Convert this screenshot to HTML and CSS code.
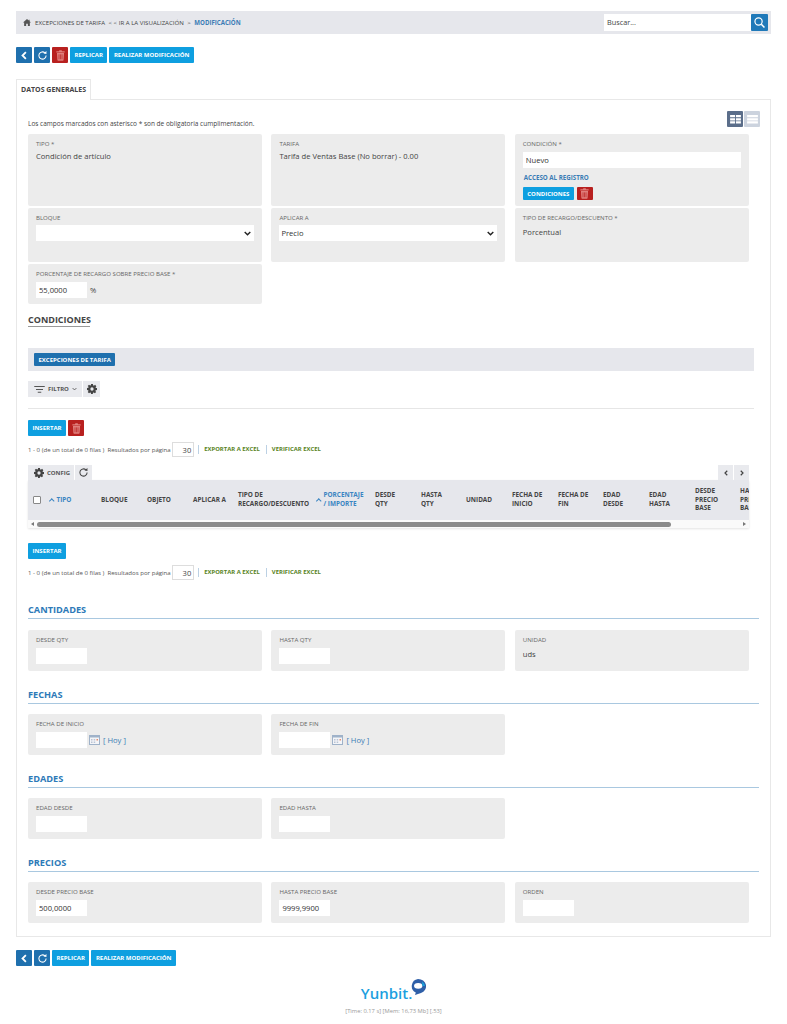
FILE: index.html
```html
<!DOCTYPE html>
<html lang="es">
<head>
<meta charset="utf-8">
<title>Excepciones de tarifa</title>
<link rel="stylesheet" href="styles.css">
</head>
<body>
<svg class="defs" width="0" height="0" aria-hidden="true">
  <symbol id="i-trash" viewBox="0 0 12 14"><path fill="currentColor" d="M4.5 0h3l.6 1.2H11.500V3H.5V1.200h3.400zM1.300 3.800h9.400l-.6 9.200a1 1 0 0 1-1 1H2.900a1 1 0 0 1-1-1z"/><path stroke="#b8201f" stroke-width=".9" d="M4 5.500v6.500M6 5.500v6.500M8 5.500v6.500"/></symbol>
  <symbol id="i-reload" viewBox="0 0 14 14"><path fill="none" stroke="currentColor" stroke-width="1.300" d="M11.600 7a4.600 4.600 0 1 1-1.500-3.400"/><path fill="currentColor" d="M8.300 4.500 12 5V1.300z"/></symbol>
  <symbol id="i-back" viewBox="0 0 8 12"><path fill="none" stroke="currentColor" stroke-width="2.400" d="M6.500 1.500 2 6l4.500 4.500"/></symbol>
  <symbol id="i-gear" viewBox="0 0 14 14"><path fill="currentColor" fill-rule="evenodd" d="M5.700 0h2.600l.3 1.800 1.100.5L11.300 1.200l1.800 1.800-1.100 1.500.5 1.100L14 5.700v2.600l-1.800.3-.5 1.100 1.100 1.500-1.800 1.800-1.500-1.100-1.100.5-.3 1.800H5.700l-.3-1.800-1.100-.5-1.500 1.100L1 11.300l1.100-1.500-.5-1.100L0 8.300V5.700l1.800-.3.500-1.100L1 2.800 2.800 1l1.500 1.100 1.100-.5zM7 4.700a2.300 2.300 0 1 0 0 4.600 2.300 2.300 0 0 0 0-4.600z"/></symbol>
  <symbol id="i-cal" viewBox="0 0 11 10"><rect width="11" height="10" fill="#9fb2c9"/><rect x="1" y="2.500" width="9" height="6.500" fill="#f4f5f8"/><path fill="#b9c4d4" d="M2 4h1.500v1.500H2zM4.700 4h1.500v1.500H4.700zM2 6.500h1.500V8H2zM4.700 6.500h1.500V8H4.700z"/><path fill="#e38b6d" d="M7.500 4H9v1.500H7.500z"/></symbol>
</svg>

<div class="page">
  <nav class="crumbs">
    <div class="crumb-path">
      <svg class="home" viewBox="0 0 14 12"><path fill="#555" d="M7 0 0 6h2v6h3.500V8h3v4H12V6h2l-2.500-2.200V1h-1.500v1.500z"/></svg>
      <span>EXCEPCIONES DE TARIFA</span>
      <span class="crumb-gap">&lt; &lt; IR A LA VISUALIZACIÓN</span>
      <span class="crumb-gap">&gt;</span>
      <b class="crumb-now">MODIFICACIÓN</b>
    </div>
    <div class="search">
      <span class="search-field">Buscar...</span>
      <span class="search-btn"><svg viewBox="0 0 14 14" width="11" height="11"><circle cx="5.800" cy="5.800" r="4.600" fill="none" stroke="#fff" stroke-width="1.500"/><path stroke="#fff" stroke-width="2" d="m9.300 9.300 4 4"/></svg></span>
    </div>
  </nav>

  <div class="actions">
    <button class="btn icon navy"><svg width="6" height="9"><use href="#i-back"/></svg></button>
    <button class="btn icon navy"><svg width="11" height="11"><use href="#i-reload"/></svg></button>
    <button class="btn icon red"><svg width="9" height="11"><use href="#i-trash"/></svg></button>
    <button class="btn sky">REPLICAR</button>
    <button class="btn sky">REALIZAR MODIFICACIÓN</button>
  </div>

  <div class="tabs"><span class="tab">DATOS GENERALES</span></div>

  <main class="panel">
    <div class="legend">
      <p>Los campos marcados con asterisco * son de obligatoria cumplimentación.</p>
      <div class="views">
        <span class="view on"><svg viewBox="0 0 12 10" width="11" height="9"><path fill="#fff" d="M0 0h5.500v2.500H0zM6.500 0H12v2.500H6.500zM0 3.500h5.500v2.500H0zM6.500 3.500H12v2.500H6.500zM0 7h5.500v2.500H0zM6.500 7H12v2.500H6.500z"/></svg></span>
        <span class="view"><svg viewBox="0 0 12 10" width="11" height="9"><path fill="#fff" d="M0 0h12v2.500H0zM0 3.500h12v2.500H0zM0 7h12v2.500H0z"/></svg></span>
      </div>
    </div>

    <div class="grid">
      <div class="card h72"><label>TIPO *</label><div class="val">Condición de artículo</div></div>
      <div class="card h72"><label>TARIFA</label><div class="val">Tarifa de Ventas Base (No borrar) - 0.00</div></div>
      <div class="card h72">
        <label>CONDICIÓN *</label>
        <input class="input wide" value="Nuevo">
        <a class="reg">ACCESO AL REGISTRO</a>
        <div class="cond-btns">
          <button class="btn sky">CONDICIONES</button>
          <button class="btn icon red"><svg width="9" height="11"><use href="#i-trash"/></svg></button>
        </div>
      </div>
      <div class="card h54"><label>BLOQUE</label><select class="select"><option></option></select></div>
      <div class="card h54"><label>APLICAR A</label><select class="select"><option>Precio</option></select></div>
      <div class="card h54"><label>TIPO DE RECARGO/DESCUENTO *</label><div class="val lower">Porcentual</div></div>
      <div class="card h40"><label>PORCENTAJE DE RECARGO SOBRE PRECIO BASE *</label><div class="inline"><input class="input short" value="55,0000"><span class="unit">%</span></div></div>
    </div>

    <h2 class="cond-title">CONDICIONES</h2>
    <div class="band"><button class="btn navy">EXCEPCIONES DE TARIFA</button></div>

    <div class="filter-row">
      <span class="tool"><svg viewBox="0 0 12 8" width="11" height="7"><path fill="#555" d="M0 0h12v1.200H0zM2 3.300h8v1.200H2zM4 6.600h4v1.200H4z"/></svg><b>FILTRO</b><svg viewBox="0 0 8 5" width="5" height="4"><path fill="none" stroke="#555" stroke-width="1.400" d="m1 1 3 3 3-3"/></svg></span>
      <span class="tool square"><svg width="10" height="10" class="dark"><use href="#i-gear"/></svg></span>
    </div>
    <hr class="rule">

    <div class="ins-row">
      <button class="btn sky ins">INSERTAR</button>
      <button class="btn icon red ins"><svg width="9" height="11"><use href="#i-trash"/></svg></button>
    </div>
    <div class="pager">
      <span>1 - 0 (de un total de 0 filas )</span><span>Resultados por página</span>
      <span class="per">30</span>
      <a class="xl first">EXPORTAR A EXCEL</a><a class="xl">VERIFICAR EXCEL</a>
    </div>

    <div class="tbl-tools">
      <div class="tools-left">
        <span class="tool config"><svg width="10" height="10" class="dark"><use href="#i-gear"/></svg><b>CONFIG</b></span>
        <span class="tool square tall"><svg width="11" height="11" class="dark"><use href="#i-reload"/></svg></span>
      </div>
      <div class="tools-right">
        <span class="tool pg"><svg width="4" height="6" class="dark"><use href="#i-back"/></svg></span>
        <span class="tool pg"><svg width="4" height="6" class="dark flip"><use href="#i-back"/></svg></span>
      </div>
    </div>
    <div class="table">
      <div class="thead">
        <span class="th"><i class="check"></i></span>
        <span class="th sort"><i class="caret"></i>TIPO</span>
        <span class="th">BLOQUE</span>
        <span class="th">OBJETO</span>
        <span class="th long">APLICAR A</span>
        <span class="th long">TIPO DE RECARGO/DESCUENTO</span>
        <span class="th sort long"><i class="caret"></i><span class="sort-text">PORCENTAJE / IMPORTE</span></span>
        <span class="th">DESDE QTY</span>
        <span class="th">HASTA QTY</span>
        <span class="th">UNIDAD</span>
        <span class="th">FECHA DE INICIO</span>
        <span class="th">FECHA DE FIN</span>
        <span class="th">EDAD DESDE</span>
        <span class="th">EDAD HASTA</span>
        <span class="th">DESDE PRECIO BASE</span>
        <span class="th">HASTA PRECIO BASE</span>
      </div>
      <div class="scrollbar">
        <i class="arrow left"></i>
        <span class="thumb"></span>
        <i class="arrow right"></i>
      </div>
    </div>

    <div class="ins-row second"><button class="btn sky ins">INSERTAR</button></div>
    <div class="pager">
      <span>1 - 0 (de un total de 0 filas )</span><span>Resultados por página</span>
      <span class="per">30</span>
      <a class="xl first">EXPORTAR A EXCEL</a><a class="xl">VERIFICAR EXCEL</a>
    </div>

    <section class="sec first-sec">
      <h3>CANTIDADES</h3>
      <div class="grid">
        <div class="card h41"><label>DESDE QTY</label><input class="input short"></div>
        <div class="card h41"><label>HASTA QTY</label><input class="input short"></div>
        <div class="card h41"><label>UNIDAD</label><div class="val unidad">uds</div></div>
      </div>
    </section>
    <section class="sec">
      <h3>FECHAS</h3>
      <div class="grid">
        <div class="card h41"><label>FECHA DE INICIO</label><div class="inline"><input class="input short"><svg class="cal" width="11" height="10"><use href="#i-cal"/></svg><a class="today">[ Hoy ]</a></div></div>
        <div class="card h41"><label>FECHA DE FIN</label><div class="inline"><input class="input short"><svg class="cal" width="11" height="10"><use href="#i-cal"/></svg><a class="today">[ Hoy ]</a></div></div>
      </div>
    </section>
    <section class="sec">
      <h3>EDADES</h3>
      <div class="grid">
        <div class="card h41"><label>EDAD DESDE</label><input class="input short"></div>
        <div class="card h41"><label>EDAD HASTA</label><input class="input short"></div>
      </div>
    </section>
    <section class="sec">
      <h3>PRECIOS</h3>
      <div class="grid">
        <div class="card h41"><label>DESDE PRECIO BASE</label><input class="input short" value="500,0000"></div>
        <div class="card h41"><label>HASTA PRECIO BASE</label><input class="input short" value="9999,9900"></div>
        <div class="card h41"><label>ORDEN</label><input class="input short"></div>
      </div>
    </section>
  </main>

  <div class="actions bottom">
    <button class="btn icon navy"><svg width="6" height="9"><use href="#i-back"/></svg></button>
    <button class="btn icon navy"><svg width="11" height="11"><use href="#i-reload"/></svg></button>
    <button class="btn sky">REPLICAR</button>
    <button class="btn sky">REALIZAR MODIFICACIÓN</button>
  </div>

  <footer class="foot">
    <div class="logo">
      <span class="logo-word">Yunbit.</span>
      <svg class="bubble" viewBox="0 0 16 16" width="16" height="16"><path fill="#2f5fa8" d="M8 0a8 7.200 0 0 1 3 13.900L5 16l.8-2.400A7.200 7.200 0 0 1 8 0z"/><ellipse cx="8.200" cy="6.800" rx="4.200" ry="2.900" fill="#fff"/><path fill="#19a3dc" d="M12 2.500a7 6 0 0 1 3 4.500h-2.500z"/></svg>
    </div>
    <p>[Time: 0.17 s] [Mem: 16,73 Mb] [.53]</p>
  </footer>
</div>
</body>
</html>
```

FILE: styles.css
```css
* { box-sizing: border-box; }
html, body { margin: 0; padding: 0; }
body { background: #fff; font-family: "Open Sans", "Liberation Sans", sans-serif; color: #444; font-size: 7px; height: 1024px; overflow: hidden; }
.defs { position: absolute; }
.page { padding: 11px 16px 0; }

.crumbs { height: 23px; background: #e6e7ec; display: flex; justify-content: space-between; align-items: center; padding: 0 3px 0 7px; }
.crumb-path { display: flex; align-items: center; font-size: 6.100px; color: #444; }
.home { width: 8px; height: 7px; margin-right: 4px; }
.crumb-gap { margin-left: 3.500px; }
.crumb-now { color: #3a7cb5; margin-left: 3.500px; font-weight: 700; }
.search { display: flex; height: 17px; width: 164px; }
.search-field { flex: 1; background: #fff; font-size: 7.300px; line-height: 17px; padding-left: 3px; color: #444; }
.search-btn { width: 17px; background: #1f79b9; display: flex; align-items: center; justify-content: center; border-radius: 1px; }

.actions { display: flex; gap: 2px; margin-top: 13px; }
.btn { height: 16px; border: 0; padding: 0 4.500px; font-family: inherit; font-size: 6px; font-weight: 700; color: #fff; display: inline-flex; align-items: center; justify-content: center; border-radius: 1px; white-space: nowrap; }
.btn.icon { width: 16px; padding: 0; }
.navy { background: #1f70ae; }
.red { background: #b8201f; color: #e07f7c; }
.sky { background: #0e9fe0; }

.tabs { margin-top: 16px; height: 20px; display: flex; }
.tab { width: 75px; height: 21px; border: 1px solid #e8e8e8; border-bottom: 0; background: #fff; font-size: 7px; font-weight: 700; color: #444; padding-left: 4px; line-height: 20px; white-space: nowrap; position: relative; z-index: 1; }

.panel { height: 838px; border: 1px solid #e8e8e8; padding: 10px 11px 0; }
.legend { display: flex; justify-content: space-between; align-items: flex-end; height: 17px; width: 732px; }
.legend p { margin: 0; font-size: 6.500px; color: #444; line-height: 9px; margin-bottom: -1px; }
.views { display: flex; gap: 1px; }
.view { width: 16px; height: 16px; background: #ccd3de; display: flex; align-items: center; justify-content: center; border-radius: 1px; }
.view.on { background: #5b6e8a; }

.grid { display: grid; grid-template-columns: 234px 234px 234px; column-gap: 9.400px; row-gap: 2px; margin-top: 7px; }
.card { background: #ececec; border-radius: 2px; padding: 6px 8px 0; }
.h72 { height: 72px; }
.h54 { height: 54px; }
.h40 { height: 40px; }
.h41 { height: 41px; }
.card label { display: block; font-size: 6.100px; line-height: 8px; color: #666; }
.val { font-size: 7.600px; color: #444; margin-top: 3px; line-height: 11px; }
.val.lower { margin-top: 5px; }
.val.unidad { margin-top: 5px; }
.input { display: block; height: 16px; border: 0; outline: 0; border-radius: 0; background: #fff; font-family: inherit; font-size: 7.600px; line-height: 16px; padding: 0 0 0 3px; color: #333; margin-top: 4px; }
.wide { width: 218px; }
.short { width: 51px; }
.reg { display: block; color: #3a7cb5; font-size: 6.200px; font-weight: 700; margin: 5px 0 0 1px; line-height: 9px; }
.cond-btns { display: flex; gap: 3px; margin-top: 5px; }
.cond-btns .btn { height: 13px; }
.select { display: block; appearance: none; height: 16px; width: 218px; margin-top: 3px; font-family: inherit; font-size: 7.600px; padding: 0 0 0 2px; color: #333; border: 0; border-radius: 0; background: #fff url("data:image/svg+xml,%3Csvg xmlns='http://www.w3.org/2000/svg' width='7' height='5'%3E%3Cpath fill='none' stroke='%23222' stroke-width='1.400' d='M.7.9l2.800 2.800L6.300.9'/%3E%3C/svg%3E") no-repeat right 3px center; }
.inline { display: flex; align-items: center; }
.unit { font-size: 7.600px; margin: 4px 0 0 3px; }

.cond-title { margin: 9px 0 0; font-size: 9px; font-weight: 700; color: #444; line-height: 13px; border-bottom: 1px solid #999; width: 62px; }
.band { width: 726px; height: 23px; background: #e6e7ec; margin-top: 21px; padding: 4px 6px; display: flex; align-items: center; }
.band .btn { height: 13px; }
.filter-row { display: flex; gap: 1px; margin-top: 10px; }
.tool { background: #e9eaee; height: 16px; display: inline-flex; align-items: center; color: #555; font-size: 6px; }
.tool b { font-weight: 700; margin: 0 3px; }
.filter-row .tool:first-child { width: 54px; padding-left: 6px; }
.square { width: 17px; justify-content: center; }
.dark { color: #444; }
.flip { transform: scaleX(-1); }
.rule { border: 0; border-top: 1px solid #e6e6e6; margin: 11px 0 0; width: 726px; }
.ins-row { display: flex; gap: 2px; margin-top: 11px; }
.ins-row.second { margin-top: 15px; }
.pager { display: flex; align-items: center; gap: 3px; height: 14px; margin-top: 6px; font-size: 6.100px; color: #555; }
.per { width: 22px; height: 15px; margin-left: -1.500px; border: 1px solid #ddd; font-size: 7.600px; text-align: right; padding-right: 2px; line-height: 14px; color: #444; }
.xl { color: #57831c; font-size: 5.900px; font-weight: 700; border-left: 1px solid #bcd1e4; padding-left: 5px; margin-left: 1px; line-height: 9px; margin-right: 2px; }
.tbl-tools { display: flex; justify-content: space-between; width: 721px; margin-top: 9px; }
.tools-left, .tools-right { display: flex; gap: 1px; }
.config { width: 46px; padding-left: 6px; height: 15px; }
.tall { height: 15px; }
.pg { width: 15px; height: 15px; justify-content: center; }
.table { width: 721px; overflow: hidden; box-shadow: 0 1px 2px #e4e4e4; }
.thead { display: grid; grid-template-columns: 16px 52px 46px 46px 45px 78px 59px 46px 45px 46px 46px 45px 46px 46px 45px 45px; width: 767px; height: 40px; background: #e6e7ec; align-items: center; padding-left: 5px; }
.th { font-size: 6.400px; font-weight: 700; line-height: 8.700px; color: #444; max-width: 32px; }
.th.long { max-width: none; }
.sort { color: #3a85c2; display: flex; align-items: center; }
.sort-text { max-width: 42px; }
.caret { width: 3.500px; height: 3.500px; border-left: 1px solid #3a85c2; border-top: 1px solid #3a85c2; transform: rotate(45deg); margin: 1px 3px 0 1px; flex: none; }
.check { display: block; width: 8px; height: 8px; background: #fff; border: 1px solid #888; border-radius: 1px; }
.scrollbar { height: 8px; display: flex; align-items: center; background: #fafafa; padding: 0 3px; }
.thumb { width: 634px; height: 5px; margin-left: 3px; background: #8b8b8b; border-radius: 3px; }
.arrow { width: 0; height: 0; border-top: 2.500px solid transparent; border-bottom: 2.500px solid transparent; }
.arrow.left { border-right: 3px solid #777; }
.arrow.right { border-left: 3px solid #777; margin-left: auto; }

.sec { margin-top: 17px; }
.first-sec { margin-top: 24px; }
.sec h3 { margin: 0; width: 731px; font-size: 9.200px; line-height: 14px; font-weight: 700; color: #2d7ab8; border-bottom: 1px solid #a9c8e0; padding-bottom: 1px; }
.sec .grid { margin-top: 10px; }
.first-sec .grid { margin-top: 11px; }
.cal { margin-left: 2px; margin-top: 4px; }
.today { font-size: 7.600px; color: #3a7cb5; margin: 4px 0 0 3px; }

.bottom { margin-top: 13px; }
.foot { text-align: center; }
.logo { display: flex; justify-content: center; align-items: flex-end; height: 24px; margin-top: 12px; }
.logo-word { font-size: 15px; font-weight: 600; color: #1c9fe0; line-height: 18px; }
.bubble { margin: 0 0 7px -2px; }
.foot p { margin: 5px 0 0; font-size: 5.800px; color: #999; }
```
